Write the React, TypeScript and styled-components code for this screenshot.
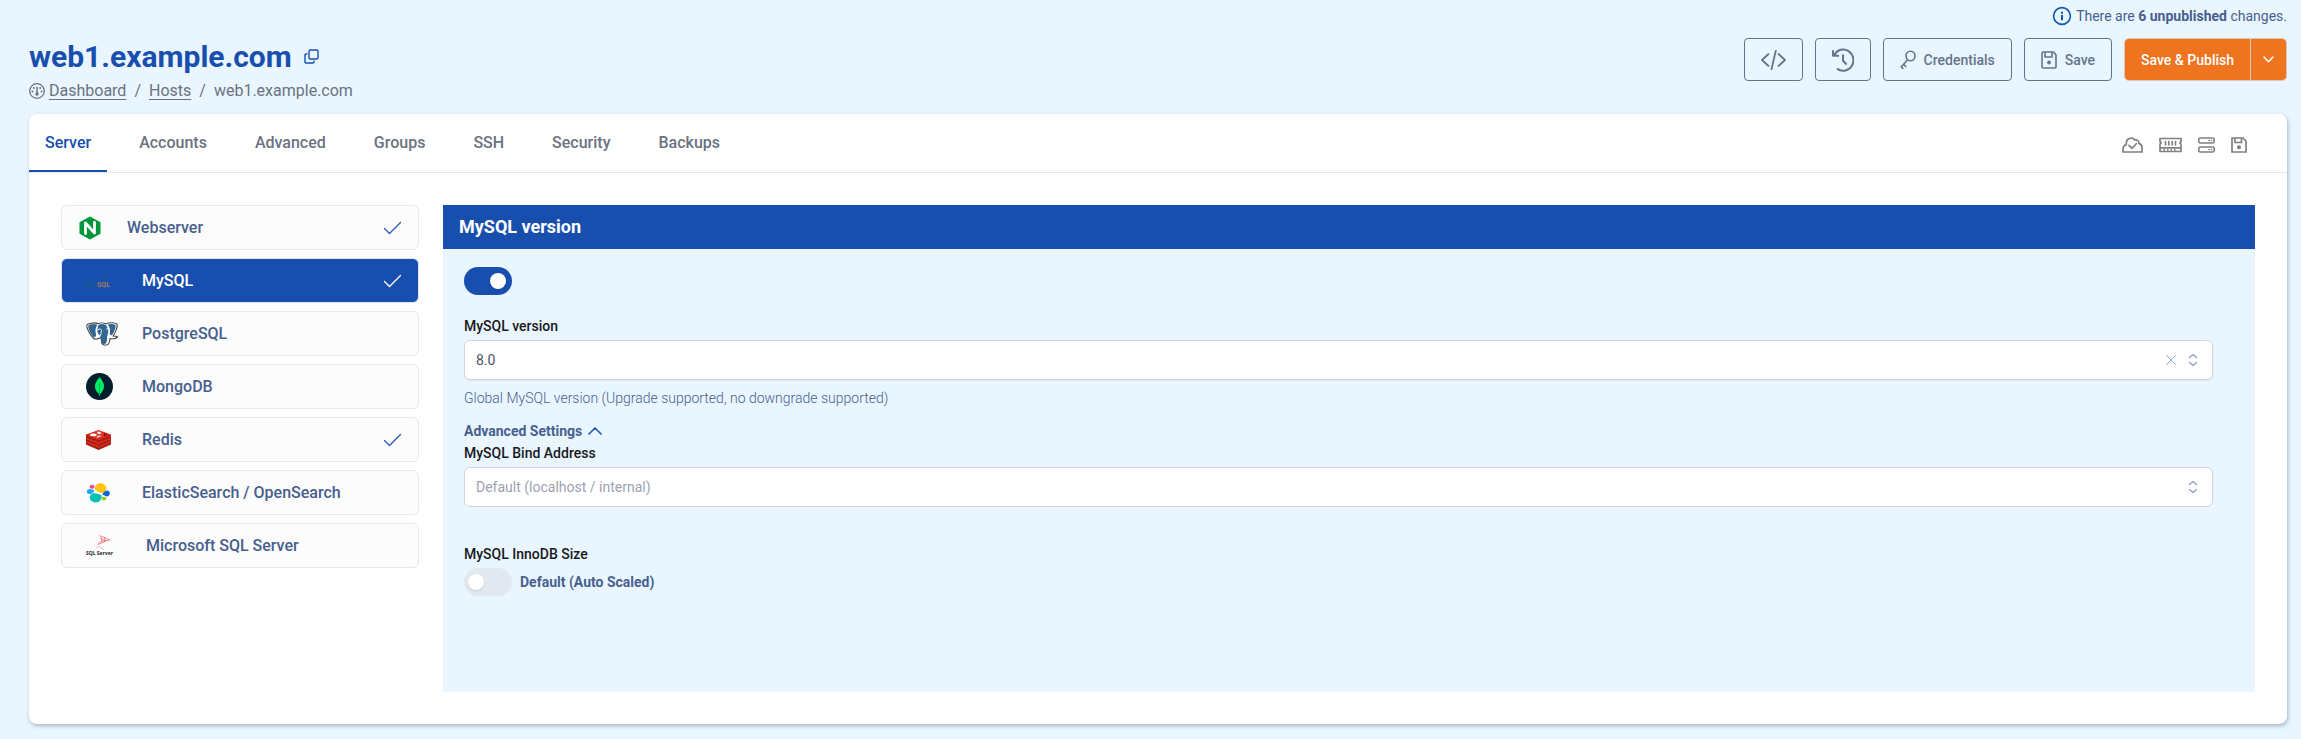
import React, { useState } from "react";
import styled, { createGlobalStyle } from "styled-components";

const color = {
  page: "#e9f6ff",
  primary: "#184fae",
  slate: "#64748b",
  ink: "#475f8e",
  gray: "#6b7280",
  line: "#e5e7eb",
  field: "#d1d5db",
  orange: "#ee7420",
};

const GlobalStyle = createGlobalStyle`
  *, *::before, *::after { box-sizing: border-box; }
  body { margin: 0; background: ${color.page}; font-family: Roboto, "Liberation Sans", sans-serif; font-size: 14px; line-height: 20px; color: ${color.ink}; }
  button, select { font: inherit; color: inherit; cursor: pointer; }
  h1, h2, p, ul, ol { margin: 0; padding: 0; list-style: none; }
  svg { display: block; flex: none; }
`;

const Page = styled.div`
  padding: 6px 14px 15px 29px;
`;
const Notice = styled.p`
  display: flex;
  justify-content: flex-end;
  align-items: center;
  gap: 4px;
  strong { font-weight: 700; }
`;
const Header = styled.header`
  display: flex;
  justify-content: space-between;
  align-items: flex-start;
  padding-top: 12px;
  height: 88px;
`;
const TitleRow = styled.div`
  display: flex;
  align-items: center;
  gap: 12px;
  padding-top: 1px;
`;
const Title = styled.h1`
  font-size: 30px;
  line-height: 36px;
  font-weight: 700;
  color: ${color.primary};
`;
const CopyButton = styled.button`
  padding: 0 0 2px;
  border: 0;
  background: none;
  color: ${color.primary};
`;
const Breadcrumbs = styled.ol`
  display: flex;
  align-items: center;
  gap: 8px;
  font-size: 16px;
  line-height: 24px;
  color: ${color.gray};
  padding-top: 4px;
`;
const Crumb = styled.li`
  display: flex;
  align-items: center;
  gap: 4px;
  a { color: inherit; text-underline-offset: 3px; }
`;
const Actions = styled.div`
  display: flex;
  gap: 12px;
`;
const ActionButton = styled.button`
  display: flex;
  align-items: center;
  justify-content: center;
  gap: 8px;
  height: 43px;
  padding: 0 16px;
  border: 1px solid ${color.slate};
  border-radius: 4px;
  background: transparent;
  color: ${color.slate};
  font-weight: 500;
`;
const SplitButton = styled.div`
  display: flex;
  height: 43px;
  border: 1px solid #d9c7bd;
  border-radius: 5px;
  overflow: hidden;
`;
const SplitPart = styled.button<{ $menu?: boolean }>`
  display: flex;
  align-items: center;
  padding: 0 ${(p) => (p.$menu ? 12 : 16)}px;
  border: 0;
  border-left: ${(p) => (p.$menu ? "1px solid #f3cbb0" : "0")};
  background: ${color.orange};
  color: #fff;
  font-weight: 500;
`;
const Card = styled.main`
  background: #fff;
  border-radius: 8px;
  box-shadow: 1px 2px 4px rgba(40, 70, 100, 0.35);
`;
const TabBar = styled.div`
  display: flex;
  justify-content: space-between;
  align-items: center;
  border-bottom: 1px solid ${color.line};
  padding-right: 40px;
`;
const Tabs = styled.nav`
  display: flex;
  gap: 16px;
`;
const Tab = styled.button<{ $active: boolean }>`
  height: 58px;
  padding: 2px 16px 0;
  border: 0;
  border-bottom: 2px solid ${(p) => (p.$active ? color.primary : "transparent")};
  background: none;
  color: ${(p) => (p.$active ? color.primary : color.gray)};
  font-size: 16px;
  font-weight: 500;
`;
const StatusIcons = styled.div`
  display: flex;
  align-items: center;
  gap: 16px;
  padding-top: 4px;
  color: #808080;
`;
const Body = styled.div`
  display: flex;
  gap: 24px;
  padding: 32px;
`;
const Services = styled.ul`
  display: flex;
  flex-direction: column;
  gap: 8px;
  flex: 0 0 358px;
`;
const Service = styled.button<{ $active: boolean; $indent: number }>`
  display: flex;
  align-items: center;
  width: 100%;
  height: 45px;
  padding: 0 16px 0 ${(p) => p.$indent}px;
  border: 1px solid ${color.line};
  border-radius: 6px;
  background: ${(p) => (p.$active ? color.primary : "#fcfcfc")};
  color: ${(p) => (p.$active ? "#fff" : color.ink)};
  font-size: 16px;
  font-weight: 500;
  text-align: left;
`;
const LogoSlot = styled.span<{ $width: number }>`
  flex: 0 0 ${(p) => p.$width}px;
`;
const ServiceName = styled.span`
  flex: 1;
  margin-left: 24px;
`;
const CheckMark = styled.span<{ $active: boolean }>`
  color: ${(p) => (p.$active ? "#fff" : "#2858b8")};
`;
const Panel = styled.section`
  flex: 1;
  min-height: 487px;
  background: ${color.page};
`;
const PanelTitle = styled.h2`
  padding: 8px 16px;
  background: ${color.primary};
  color: #fff;
  font-size: 18px;
  line-height: 28px;
  font-weight: 700;
`;
const PanelBody = styled.div`
  padding: 18px 42px 18px 21px;
`;
const Toggle = styled.input`
  appearance: none;
  display: block;
  width: 48px;
  height: 28px;
  margin: 0;
  padding: 6px 4px;
  border-radius: 14px;
  background: #e2e8f0;
  cursor: pointer;
  &::before {
    content: "";
    display: block;
    width: 16px;
    height: 16px;
    border-radius: 50%;
    background: #fff;
    box-shadow: 0 1px 2px rgba(0, 0, 0, 0.12);
  }
  &:checked { background: ${color.primary}; }
  &:checked::before { margin-left: 22px; }
`;
const Label = styled.label`
  display: block;
  color: #18181b;
  font-weight: 500;
  line-height: 24px;
`;
const FieldLabel = styled(Label)`
  padding-bottom: 2px;
`;
const SelectBox = styled.div`
  display: grid;
  align-items: center;
  & > * { grid-row: 1; grid-column: 1; }
`;
const Select = styled.select<{ $empty?: boolean }>`
  appearance: none;
  width: 100%;
  height: 40px;
  padding: 0 60px 0 11px;
  border: 1px solid ${color.field};
  border-radius: 6px;
  background: #fff;
  color: ${(p) => (p.$empty ? "#9ca3af" : "#475569")};
  box-shadow: ${(p) => (p.$empty ? "none" : "0 1px 2px rgba(0, 0, 0, 0.06)")};
`;
const SelectIcons = styled.span`
  display: flex;
  align-items: center;
  gap: 12px;
  justify-self: end;
  padding-right: 15px;
  color: #94a3c0;
  pointer-events: none;
`;
const ClearButton = styled.button`
  padding: 0;
  border: 0;
  background: none;
  pointer-events: auto;
`;
const Help = styled.p`
  padding-top: 8px;
  font-weight: 300;
`;
const Disclosure = styled.button`
  display: flex;
  align-items: center;
  gap: 6px;
  margin-top: 13px;
  padding: 0;
  border: 0;
  background: none;
  font-weight: 700;
`;
const Group = styled.div<{ $top: number }>`
  padding-top: ${(p) => p.$top}px;
`;
const ToggleRow = styled.div`
  display: flex;
  align-items: center;
  gap: 8px;
  label { font-weight: 700; }
`;

const stroke = { fill: "none", stroke: "currentColor", strokeLinecap: "round", strokeLinejoin: "round" } as const;

const InfoIcon = () => (
  <svg width="20" height="20" viewBox="0 0 20 20" {...stroke} stroke="#0b57b0" strokeWidth="1.6">
    <circle cx="10" cy="10" r="8.400" />
    <path d="M10 9v5.200M10 5.800v1.900" strokeWidth="2" strokeLinecap="butt" />
  </svg>
);
const CopyIcon = () => (
  <svg width="15" height="15" viewBox="0 0 15 15" {...stroke} strokeWidth="1.400">
    <rect x="5" y="1" width="9" height="9" rx="1.200" />
    <path d="M3 5H2a1 1 0 0 0-1 1v7a1 1 0 0 0 1 1h7a1 1 0 0 0 1-1v-1" />
  </svg>
);
const GaugeIcon = () => (
  <svg width="16" height="16" viewBox="0 0 16 16" {...stroke} strokeWidth="1.300">
    <circle cx="8" cy="8" r="7.300" />
    <path d="M8 4.500v6" strokeWidth="1.500" />
    <circle cx="8" cy="11" r="1.700" fill="currentColor" stroke="none" />
    <g fill="currentColor" stroke="none">
      <circle cx="3.500" cy="8.500" r="1" />
      <circle cx="12.500" cy="8.500" r="1" />
      <circle cx="4.800" cy="5" r="1" />
      <circle cx="11.200" cy="5" r="1" />
    </g>
  </svg>
);
const CodeIcon = () => (
  <svg width="25" height="22" viewBox="0 0 25 22" {...stroke} strokeWidth="1.800">
    <path d="M7.500 5 1 11l6.500 6M17.500 5l6.500 6-6.500 6M14.800 1.800 10.500 20.200" />
  </svg>
);
const HistoryIcon = () => (
  <svg width="22" height="24" viewBox="0 0 22 24" {...stroke} strokeWidth="2" strokeLinecap="butt">
    <path d="M2.300 7A10.200 10.700 0 1 1 5 20.600M1 2.200V7.800H7" />
    <path d="M11 6.500v6.200l3.700 3.800" />
  </svg>
);
const KeyIcon = () => (
  <svg width="16" height="20" viewBox="0 0 16 20" {...stroke} strokeWidth="1.600" strokeLinecap="butt">
    <ellipse cx="10.500" cy="6" rx="4.500" ry="4.800" />
    <path d="M7.500 10 1 17M3.600 14.200l2.600 2.800M1 16.500l2.200 2.400" />
  </svg>
);
const SaveIcon = () => (
  <svg width="16" height="18" viewBox="0 0 16 18" {...stroke} strokeWidth="1.600">
    <path d="M2 1h10.500L15 4v12a1 1 0 0 1-1 1H2a1 1 0 0 1-1-1V2a1 1 0 0 1 1-1zM4 1v5h7V1" />
    <circle cx="8" cy="11.500" r="1.900" fill="currentColor" stroke="none" />
  </svg>
);
const DiskIcon = () => (
  <svg width="16" height="16" viewBox="0 0 16 16" {...stroke} strokeWidth="1.700" strokeLinejoin="miter">
    <path d="M1 1h11l3 3v11H1zM4 1v4.500h6.500V1" />
    <circle cx="8" cy="10.300" r="2" fill="currentColor" stroke="none" />
  </svg>
);
const Chevron = ({ up }: { up?: boolean }) => (
  <svg width={up ? 14 : 11} height={up ? 8 : 7} viewBox={up ? "0 0 14 8" : "0 0 11 7"} {...stroke} strokeWidth={up ? 1.7 : 1.5} stroke={up ? "#2858b8" : "#fff"}>
    <path d={up ? "M1 7l6-6 6 6" : "M1 1l4.500 4.700L10 1"} />
  </svg>
);
const CheckIcon = () => (
  <svg width="19" height="14" viewBox="0 0 19 14" {...stroke} strokeWidth="1.300">
    <path d="M1.500 7.500 6.500 12.500 17.500 1.500" />
  </svg>
);
const CloudIcon = () => (
  <svg width="21" height="16" viewBox="0 0 21 16" {...stroke} strokeWidth="1.700" strokeLinejoin="miter">
    <path d="M1 15V12C1 9.700 2.300 8.200 4.200 7.600 4.200 3.800 6 1.300 8.800 1.100c2-.2 3.200.5 4.100 1.800 2.500-.3 4 1 4.100 3.500 2 .8 3 2.200 3 4.500V15zM7 8.300l3 3 4.500-4.800" />
  </svg>
);
const MemoryIcon = () => (
  <svg width="23" height="16" viewBox="0 0 23 16" {...stroke} strokeWidth="1.700">
    <path d="M1 1.500h21v3.200l-1.200 1.200L22 7.100v7.400H1V7.100l1.200-1.200L1 4.700zM1.500 10.800h20M6.500 4.500v3.300M9.800 4.500v3.300M13.200 4.500v3.300M16.500 4.500v3.300" />
    <path d="M4.500 12.900h14" strokeDasharray="1.500 2" strokeLinecap="butt" />
  </svg>
);
const ServersIcon = () => (
  <svg width="17" height="16" viewBox="0 0 17 16" {...stroke} strokeWidth="1.600">
    <rect x=".8" y="1" width="15.400" height="5" rx="1.500" />
    <rect x=".8" y="10" width="15.400" height="5" rx="1.500" />
    <path d="M11 3.500h.1M13.500 3.500h.1M11 12.500h.1M13.500 12.500h.1" />
  </svg>
);
const ClearIcon = () => (
  <svg width="10" height="10" viewBox="0 0 10 10" {...stroke} strokeWidth="1">
    <path d="M.5.500l9 9M9.500.500l-9 9" />
  </svg>
);
const SortIcon = () => (
  <svg width="10" height="14" viewBox="0 0 10 14" {...stroke} strokeWidth="1.500">
    <path d="M1.500 4.500 5 1.500l3.500 3M1.500 9.500 5 12.500l3.500-3" />
  </svg>
);

const NginxLogo = () => (
  <svg width="22" height="24" viewBox="0 0 22 24">
    <path d="M11 .5 21.500 6.300v11.400L11 23.500.500 17.700V6.300z" fill="#009639" />
    <path d="M6.500 17.500V7L15.500 17V6.500" fill="none" stroke="#fff" strokeWidth="2.800" strokeLinecap="round" strokeLinejoin="round" />
  </svg>
);
const MysqlLogo = () => (
  <svg width="26" height="16" viewBox="0 0 26 16" fill="none">
    <path d="M16 1c3 .3 5 2.500 6 6l2 2.500-2.500.5M16 1l1 3M17 4l2 5" stroke="#10608c" strokeWidth=".8" />
    <text x="0" y="14" fontSize="7" fontFamily="Roboto, sans-serif" fill="#10608c">My</text>
    <text x="11" y="14" fontSize="7" fontWeight="700" fontFamily="Roboto, sans-serif" fill="#a77c55">SQL</text>
  </svg>
);
const PostgresLogo = () => (
  <svg width="32" height="24" viewBox="0 0 32 24" strokeLinejoin="round" strokeLinecap="round">
    <path d="M4 1.500C8 .5 11 1 12 1.700c2-1 6-1 8 0 4-1.500 9-1 11 .3.800 3-1.800 9.500-4 12l4.500.5c-1 2.200-4.500 2.500-7.500 2-.2 3-.5 5.500-3 6.300-3 .8-5.300-.2-5.500-3l-.5-5c-1 1.500-2 2-3 1.500-1 1.300-3.500 1.300-5-.5C3.500 12 0 5 1 3c.5-.8 1.500-1.300 3-1.500z" fill="#fff" stroke="#444" strokeWidth="1.100" />
    <path d="M4 2.600C7 1.900 9.500 1.900 11.300 2.700 9.500 5.500 9 9 10 12c.5 1 0 2-1.500 3.500C5 14 2 6 2.300 4c.2-.7 1-1.200 1.700-1.400zM13 2.800c2-1 5-1 7 .3 2 2.700 3 6.700 1.500 9.900-1 3 .5 8-2.500 8.800-2 .5-3.500 0-3.700-2l-.5-6.300c-2-.5-3.500-2-3.300-5C11.500 6 11.500 4 13 2.800zM21.500 2.500c3-1 6.500-.5 8 .5.500 2.700-1.500 8-4 10.500L23.600 12C24.500 8.500 24 5 21.500 2.500z" fill="#336791" />
    <path d="M12 7.500c2-1 3.500-.5 3.500 1s-.5 3-1 4.500M20.500 7c1-.7 2-.7 3 0" fill="none" stroke="#fff" strokeWidth=".9" />
  </svg>
);
const MongoLogo = () => (
  <svg width="27" height="27" viewBox="0 0 27 27">
    <circle cx="13.500" cy="13.500" r="13.500" fill="#001e2b" />
    <path d="M13.500 4c.5 1.500 4.500 4 4.500 9.300 0 3.700-2 6-3.800 7.400L13.800 23h-.6l-.3-2.300C11 19.300 9 17 9 13.500 9 8.500 13 5.500 13.500 4z" fill="#00ed64" />
    <path d="M13.500 10v12" stroke="#00a846" strokeWidth=".8" />
  </svg>
);
const RedisLogo = () => (
  <svg width="25" height="20" viewBox="0 0 25 20">
    <path d="M0 10v4.500l12.500 5.500L25 14.500V10z" fill="#a41e11" />
    <path d="M0 10.500 12.500 5 25 10.500v2L12.500 18 0 12.500z" fill="#d82c20" />
    <path d="M0 7.500v3.200l12.500 5.300L25 10.700V7.500z" fill="#a41e11" />
    <path d="M0 7.500 12.500 3 25 7.500v1.700l-12.500 5L0 9.200z" fill="#d82c20" />
    <path d="M0 4.500v2.700l12.500 5L25 7.200V4.500z" fill="#a41e11" />
    <path d="M0 4.500 12.500 0 25 4.500v.8l-12.500 5L0 5.300z" fill="#d82c20" />
    <path d="m11 1.300 2 .7 2-.6-.6 1.200 2 .8-2.500.2-1 1-.7-1.200-2-.3 1.500-.7zM10 8l2.500-2.600 3.500.7z" fill="#fff" />
    <ellipse cx="7.500" cy="4.900" rx="3.300" ry="1.300" fill="#fff" />
    <path d="m18 3.300 3.500 1.400L18 6z" fill="#7a0c00" />
  </svg>
);
const ElasticLogo = () => (
  <svg width="25" height="20" viewBox="0 0 25 20">
    <path d="M9 6.500C8.300 3 10.800.3 14.300.3c3.500 0 6.200 2.500 6.200 5.400 0 2-1.500 3.500-3.700 4.500L12 9z" fill="#fec514" />
    <path d="M15.500 12.300c.8 4-2 7.200-5.800 7.200-3.200 0-6-2.300-6-5.200 0-2 1.800-3.600 3.800-4.300l5 1z" fill="#00bfb3" />
    <path d="M8 7c.2 2-2 4-4.500 4C1.700 11 .8 9.800.8 8.700.8 7 2.400 6 4.300 6z" fill="#1ba9f5" />
    <ellipse cx="6" cy="3.800" rx="2.600" ry="2" fill="#f04e98" />
    <path d="M16.300 11.500c1-2 2.700-3.800 5-4 1.500 0 2.500 1.300 2.500 2.800 0 2-1.500 3.300-3.200 3.300z" fill="#0b64dd" />
    <path d="M16.300 13.700l4.200.8c0 2-1 3-2.500 3-1.300 0-2-.6-2.300-1.200z" fill="#93c90e" />
  </svg>
);
const MssqlLogo = () => (
  <svg width="32" height="24" viewBox="0 0 32 24" fill="none">
    <path d="M13 1c2 1.500 3 3 2.500 5.500L12 10.500M15 2l9 4-9 1.500M14.500 4.500 20 7l-8 3.500M18 3l1 4" stroke="#e35b58" strokeWidth=".7" />
    <path d="M10 14c2-2 4-1.500 5 0l3 1.500" stroke="#bbb" strokeWidth=".8" />
    <text x="0" y="21" fontSize="5" fontWeight="700" fontFamily="Open Sans, sans-serif" fill="#222">SQL Server</text>
  </svg>
);

const tabs = ["Server", "Accounts", "Advanced", "Groups", "SSH", "Security", "Backups"];
const services = [
  { name: "Webserver", Logo: NginxLogo, indent: 17, slot: 24, on: true },
  { name: "MySQL", Logo: MysqlLogo, indent: 24, slot: 32, on: true },
  { name: "PostgreSQL", Logo: PostgresLogo, indent: 24, slot: 32, on: false },
  { name: "MongoDB", Logo: MongoLogo, indent: 24, slot: 32, on: false },
  { name: "Redis", Logo: RedisLogo, indent: 24, slot: 32, on: true },
  { name: "ElasticSearch / OpenSearch", Logo: ElasticLogo, indent: 24, slot: 32, on: false },
  { name: "Microsoft SQL Server", Logo: MssqlLogo, indent: 24, slot: 36, on: false },
];

export default function App() {
  const [tab, setTab] = useState("Server");
  const [service, setService] = useState("MySQL");
  return (
    <>
      <GlobalStyle />
      <Page>
        <Notice>
          <InfoIcon />
          <span>There are <strong>6 unpublished</strong> changes.</span>
        </Notice>
        <Header>
          <div>
            <TitleRow>
              <Title>web1.example.com</Title>
              <CopyButton aria-label="Copy host name"><CopyIcon /></CopyButton>
            </TitleRow>
            <Breadcrumbs>
              <Crumb><GaugeIcon /><a href="#dashboard">Dashboard</a></Crumb>
              <li>/</li>
              <Crumb><a href="#hosts">Hosts</a></Crumb>
              <li>/</li>
              <Crumb>web1.example.com</Crumb>
            </Breadcrumbs>
          </div>
          <Actions>
            <ActionButton aria-label="Code"><CodeIcon /></ActionButton>
            <ActionButton aria-label="History"><HistoryIcon /></ActionButton>
            <ActionButton><KeyIcon />Credentials</ActionButton>
            <ActionButton><SaveIcon />Save</ActionButton>
            <SplitButton>
              <SplitPart>Save &amp; Publish</SplitPart>
              <SplitPart $menu aria-label="More publish options"><Chevron /></SplitPart>
            </SplitButton>
          </Actions>
        </Header>
        <Card>
          <TabBar>
            <Tabs>
              {tabs.map((t) => (
                <Tab key={t} $active={t === tab} onClick={() => setTab(t)}>{t}</Tab>
              ))}
            </Tabs>
            <StatusIcons><CloudIcon /><MemoryIcon /><ServersIcon /><DiskIcon /></StatusIcons>
          </TabBar>
          <Body>
            <Services>
              {services.map(({ name, Logo, indent, slot, on }) => (
                <li key={name}>
                  <Service $active={name === service} $indent={indent} onClick={() => setService(name)}>
                    <LogoSlot $width={slot}><Logo /></LogoSlot>
                    <ServiceName>{name}</ServiceName>
                    {on && <CheckMark $active={name === service}><CheckIcon /></CheckMark>}
                  </Service>
                </li>
              ))}
            </Services>
            <Panel>
              <PanelTitle>MySQL version</PanelTitle>
              <PanelBody>
                <Toggle type="checkbox" defaultChecked aria-label="Enable MySQL" />
                <Group $top={19}>
                  <FieldLabel htmlFor="version">MySQL version</FieldLabel>
                  <SelectBox>
                    <Select id="version"><option>8.0</option></Select>
                    <SelectIcons>
                      <ClearButton aria-label="Clear version"><ClearIcon /></ClearButton>
                      <SortIcon />
                    </SelectIcons>
                  </SelectBox>
                  <Help>Global MySQL version (Upgrade supported, no downgrade supported)</Help>
                </Group>
                <Disclosure aria-expanded="true">Advanced Settings<Chevron up /></Disclosure>
                <FieldLabel htmlFor="bind">MySQL Bind Address</FieldLabel>
                <SelectBox>
                  <Select id="bind" $empty><option>Default (localhost / internal)</option></Select>
                  <SelectIcons><SortIcon /></SelectIcons>
                </SelectBox>
                <Group $top={35}>
                  <FieldLabel htmlFor="innodb">MySQL InnoDB Size</FieldLabel>
                  <ToggleRow>
                    <Toggle id="innodb" type="checkbox" />
                    <label htmlFor="innodb">Default (Auto Scaled)</label>
                  </ToggleRow>
                </Group>
              </PanelBody>
            </Panel>
          </Body>
        </Card>
      </Page>
    </>
  );
}
